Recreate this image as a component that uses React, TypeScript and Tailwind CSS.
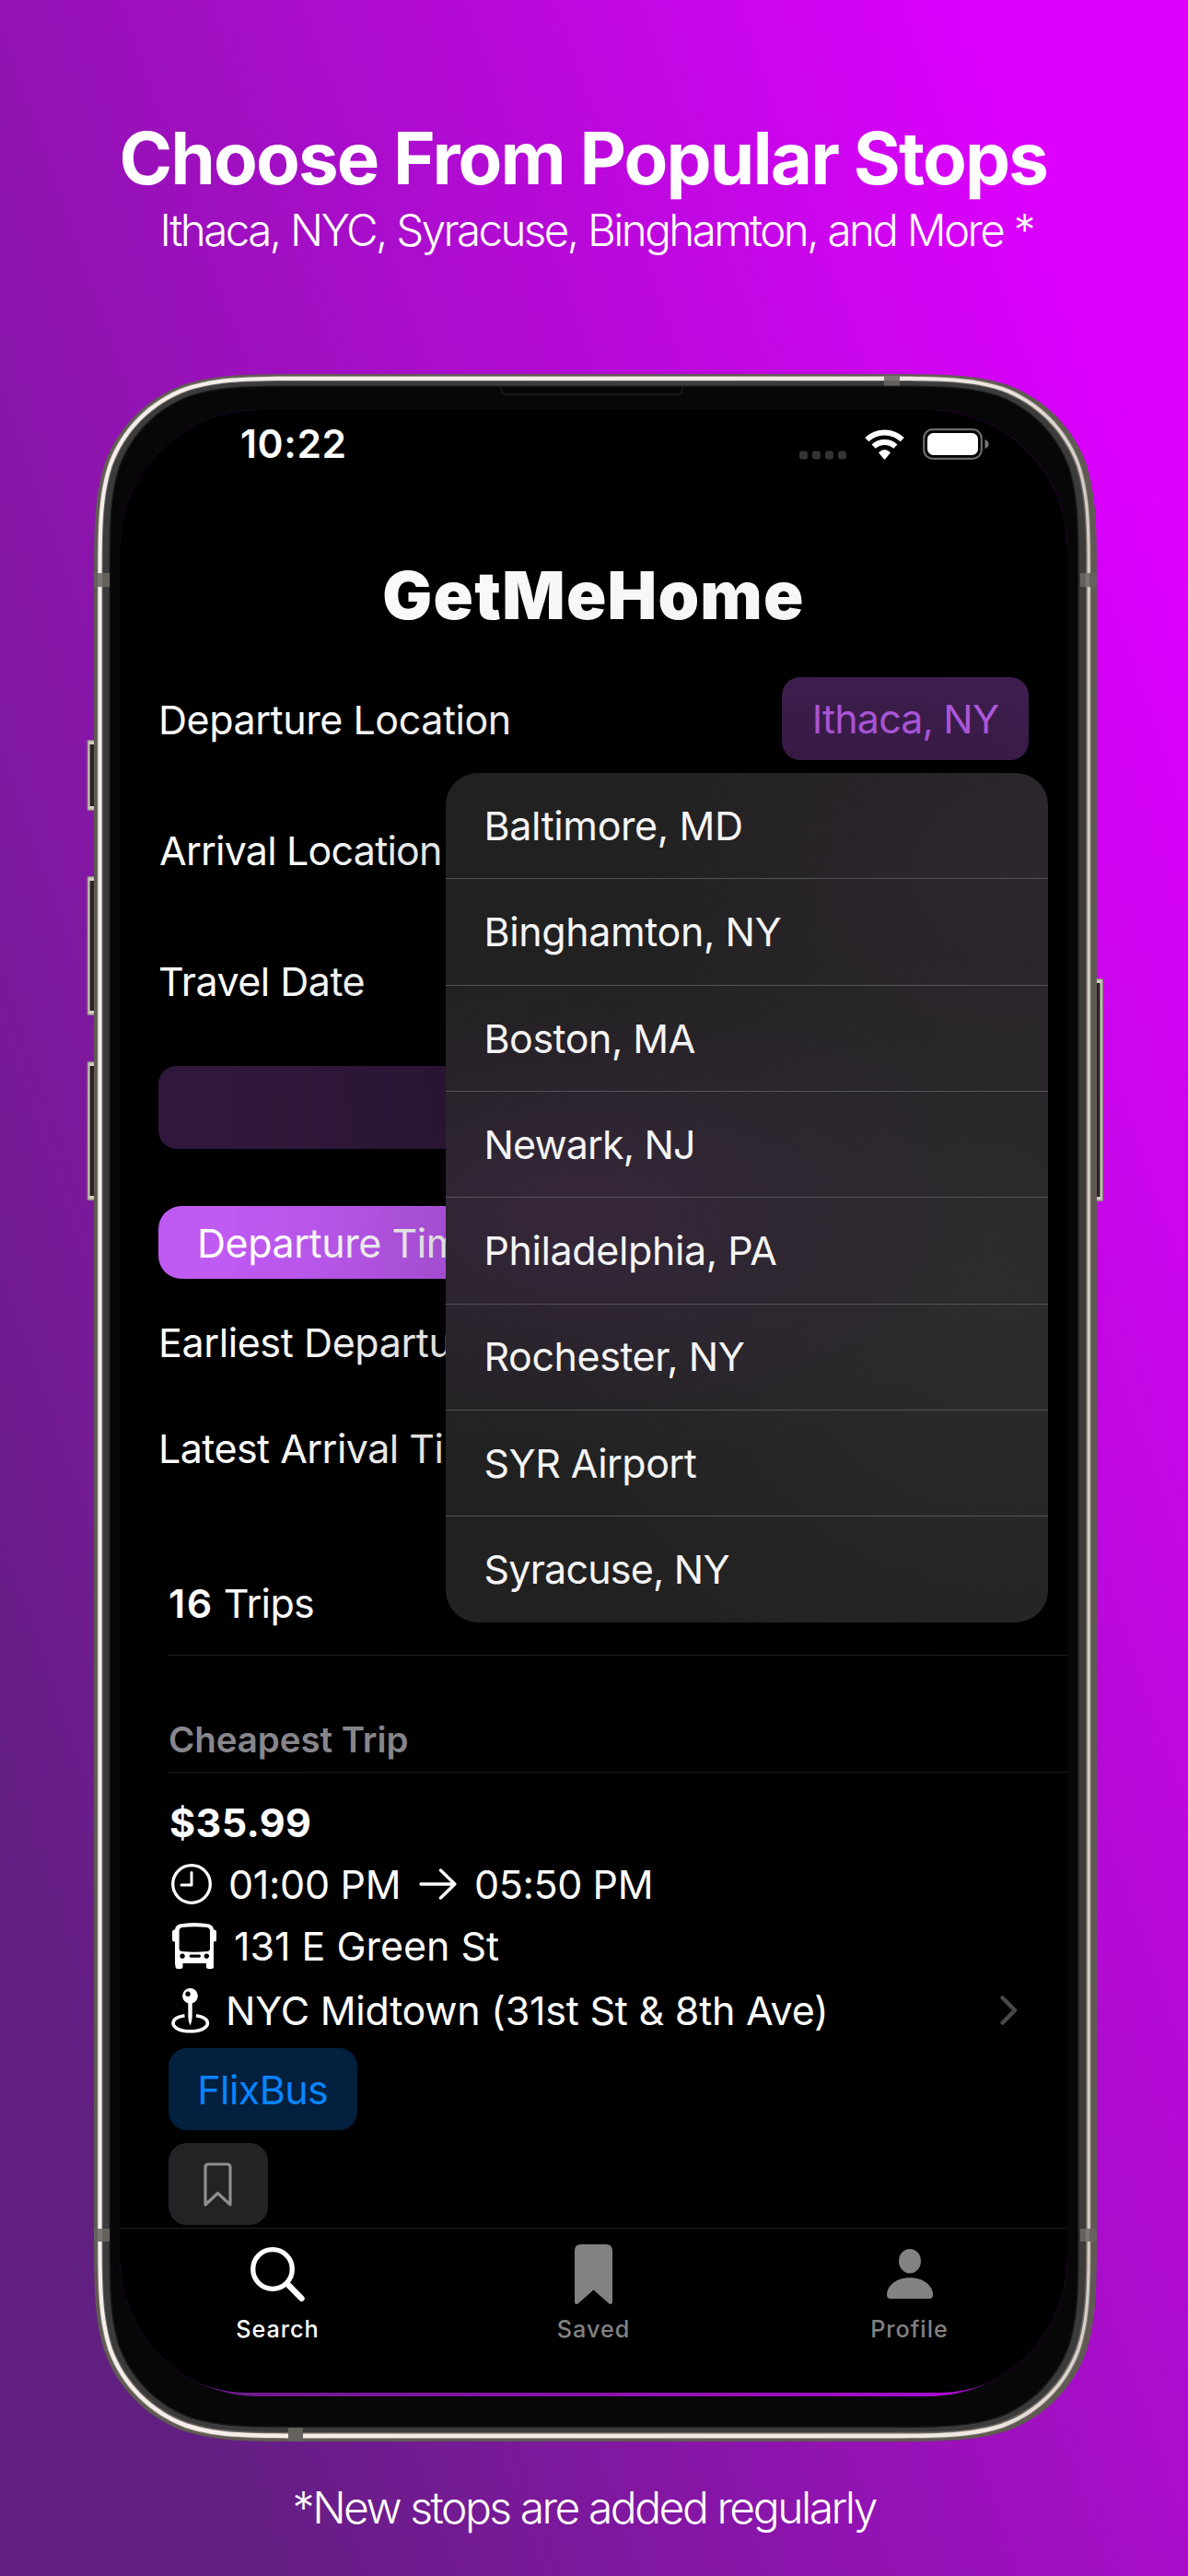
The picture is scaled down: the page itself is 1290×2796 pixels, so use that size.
import React from "react";

/** Rounded rectangle with continuous-curvature corners. */
function squircle(x: number, y: number, w: number, h: number, r: number) {
  const a = 1.52866483 * r;
  const b = 1.08849323 * r;
  const c = 0.86840689 * r;
  const d = 0.63149399 * r;
  const e = 0.07491176 * r;
  const f = 0.37282392 * r;
  const g = 0.16905899 * r;
  const R = x + w;
  const B = y + h;
  return [
    `M${x + a} ${y}H${R - a}`,
    `C${R - b} ${y} ${R - c} ${y} ${R - d} ${y + e}`,
    `C${R - f} ${y + g} ${R - g} ${y + f} ${R - e} ${y + d}`,
    `C${R} ${y + c} ${R} ${y + b} ${R} ${y + a}`,
    `V${B - a}`,
    `C${R} ${B - b} ${R} ${B - c} ${R - e} ${B - d}`,
    `C${R - g} ${B - f} ${R - f} ${B - g} ${R - d} ${B - e}`,
    `C${R - c} ${B} ${R - b} ${B} ${R - a} ${B}`,
    `H${x + a}`,
    `C${x + b} ${B} ${x + c} ${B} ${x + d} ${B - e}`,
    `C${x + f} ${B - g} ${x + g} ${B - f} ${x + e} ${B - d}`,
    `C${x} ${B - c} ${x} ${B - b} ${x} ${B - a}`,
    `V${y + a}`,
    `C${x} ${y + b} ${x} ${y + c} ${x + e} ${y + d}`,
    `C${x + g} ${y + f} ${x + f} ${y + g} ${x + d} ${y + e}`,
    `C${x + c} ${y} ${x + b} ${y} ${x + a} ${y}Z`,
  ].join("");
}

function SideButton({ x, y, h, right = false }: { x: number; y: number; h: number; right?: boolean }) {
  return (
    <g>
      <rect x={x} y={y} width="8" height={h} rx="1.5" fill="#8f8a80" />
      <rect x={right ? x : x + 1.5} y={y + 1.5} width="6.5" height={h - 3} fill="#d2cdc3" />
      <rect x={right ? x : x + 3} y={y + 5} width="4.5" height={h - 10} fill="#2b2422" />
    </g>
  );
}

function PhoneFrame() {
  return (
    <svg
      className="pointer-events-none absolute top-0 -left-3"
      width="1113"
      height="2244"
      viewBox="-12 0 1113 2244"
      aria-hidden="true"
    >
      <defs>
        <linearGradient id="rim" x1="0" x2="1" y1="0" y2="0">
          <stop offset="0" stopColor="#f5eeea" />
          <stop offset="0.9" stopColor="#efe7e2" />
          <stop offset="1" stopColor="#d3cbc5" />
        </linearGradient>
      </defs>
      <SideButton x={-7.5} y={397} h={77} />
      <SideButton x={-7.5} y={545} h={151} />
      <SideButton x={-7.5} y={746} h={151} />
      <SideButton x={1088} y={656} h={242} right />
      <path d={squircle(0, 0, 1089, 2244, 154)} fill="#5f5b53" />
      <path d={squircle(3.6, 2, 1079, 2239, 151.5)} fill="#8a837c" />
      <path d={squircle(4.4, 2.8, 1077.4, 2237.4, 151)} fill="url(#rim)" />
      <path d={squircle(8.6, 7, 1070, 2228.5, 147)} fill="#6d6763" />
      <path d={squircle(9.6, 8, 1067.5, 2226, 146)} fill="#3b3b3b" />
      <path d={squircle(16.5, 12.5, 1053, 2216.5, 139.5)} fill="#191919" />
      <path d={squircle(18, 14, 1050, 2213.5, 138)} fill="#070707" />
      <g fill="#65625e">
        <rect x="0" y="216" width="17" height="15" />
        <rect x="0" y="2013" width="17" height="14" />
        <rect x="1071" y="216" width="18" height="15" />
        <rect x="1071" y="2013" width="18" height="14" />
        <rect x="858" y="0" width="17" height="12.5" />
        <rect x="211" y="2229" width="16" height="15" />
      </g>
      <g fill="#7b7873">
        <rect x="4" y="216" width="5" height="15" />
        <rect x="4" y="2013" width="5" height="14" />
        <rect x="1077" y="216" width="4" height="15" />
        <rect x="1077" y="2013" width="4" height="14" />
        <rect x="858" y="2" width="17" height="5" />
      </g>
      <path d="M441.5 14l2 6q.7 2 3 2H635q2 0 2.700-2l2-6" fill="#060606" stroke="#1e1e1e" strokeWidth="1.300" />
    </svg>
  );
}

function StatusIcons() {
  return (
    <div className="flex items-center gap-5">
      <svg width="51" height="33" viewBox="0 0 51 33" fill="#343434">
        <rect x="0" y="23.500" width="9" height="9" rx="3" />
        <rect x="14" y="23.500" width="9" height="9" rx="3" />
        <rect x="28" y="23.500" width="9" height="9" rx="3" />
        <rect x="42" y="23.500" width="9" height="9" rx="3" />
      </svg>
      <svg width="43" height="33" viewBox="0 0 43 33" fill="none" stroke="#fff" strokeWidth="6">
        <path d="M2.200 11.200A28 28 0 0 1 40.800 11.200" />
        <path d="M9.600 18.600A17.500 17.500 0 0 1 33.400 18.600" />
        <path d="M21.500 32L16 25.200Q21.500 20.200 27 25.200Z" fill="#fff" stroke="#fff" strokeWidth="1.500" strokeLinejoin="round" />
      </svg>
      <svg width="72" height="34" viewBox="0 0 72 34">
        <rect x="1.200" y="1.200" width="62.600" height="31.600" rx="9.500" fill="none" stroke="#6b6b6b" strokeWidth="2.200" />
        <rect x="5" y="5" width="55" height="24" rx="6.500" fill="#fff" />
        <path d="M67.500 12q4 1.500 4 5t-4 5z" fill="#767676" />
      </svg>
    </div>
  );
}

function ClockIcon() {
  return (
    <svg width="44" height="44" viewBox="0 0 44 44" fill="none" stroke="#fff" strokeLinecap="round" strokeLinejoin="round">
      <circle cx="22" cy="22" r="20.300" strokeWidth="3.300" />
      <path d="M22 9.500V23H11" strokeWidth="3" />
    </svg>
  );
}

function ArrowIcon() {
  return (
    <svg width="41" height="34" viewBox="0 0 41 34" fill="none" stroke="#fff" strokeWidth="3.400" strokeLinecap="round" strokeLinejoin="round">
      <path d="M2 17H38.500M23.500 2L38.800 17L23.500 32" />
    </svg>
  );
}

function BusIcon() {
  return (
    <svg width="48" height="50" viewBox="0 0 48 50" fill="#fff">
      <path
        fillRule="evenodd"
        d="M3 7.500Q3.300 3 8 1.500Q15 0 24 0T40 1.500Q44.700 3 45 7.500V47.500Q45 50 42.500 50H39.500Q37 50 37 47.500V44H11.500V47.500Q11.500 50 9 50H6Q3.500 50 3.500 47.500L3 44ZM11 5Q7.600 5.500 7.600 9V28Q7.600 30.700 10.500 31Q24 32.500 38 31Q41 30.700 41 28V9Q41 5.500 37.500 5Q24 3.600 11 5ZM11 33.400a2.800 2.800 0 1 0 .01 0ZM37.300 33.400a2.800 2.800 0 1 0 .01 0ZM20.200 34.500a1.600 1.600 0 0 0 0 3.200h9.200a1.600 1.600 0 0 0 0-3.200Z"
      />
      <rect x="0" y="7.500" width="6" height="13" rx="2.500" />
      <rect x="42" y="7.500" width="6" height="13" rx="2.500" />
    </svg>
  );
}

function PinIcon() {
  return (
    <svg width="42" height="49" viewBox="0 0 42 49">
      <path d="M14.500 29.800C7 31 2 34 2 38C2 43 10 46.800 20.700 46.800S39.400 43 39.400 38C39.400 34 34 31 27 29.800" fill="none" stroke="#fff" strokeWidth="3.600" />
      <path fillRule="evenodd" fill="#fff" d="M20.500 0a8.400 8.400 0 0 1 2.200 16.500V31q-.2 6-2.200 9.500Q18.500 37 18.300 31V16.500A8.400 8.400 0 0 1 20.500 0ZM18 3.500a2.800 2.800 0 1 0 .01 0Z" />
    </svg>
  );
}

function SearchIcon() {
  return (
    <svg width="59" height="59" viewBox="0 0 59 59" fill="none" stroke="#fff">
      <circle cx="24" cy="24" r="21.300" strokeWidth="5.300" />
      <path d="M40 40L55.500 55.800" strokeWidth="6.400" strokeLinecap="round" />
    </svg>
  );
}

function BookmarkFilled() {
  return (
    <svg width="41" height="65" viewBox="0 0 41 65" fill="#828282">
      <path d="M0 7Q0 0 7 0H34Q41 0 41 7V62Q41 66 37.500 64.500L20.500 49.500L3.500 64.500Q0 66 0 62Z" />
    </svg>
  );
}

function ProfileIcon() {
  return (
    <svg width="50" height="54" viewBox="0 0 50 54" fill="#828282">
      <ellipse cx="25" cy="13.200" rx="12" ry="13.200" />
      <path d="M4 54Q0 54 0 50C0 40 10 31.300 25 31.300S50 40 50 50Q50 54 46 54Z" />
    </svg>
  );
}

const STOPS = [
  { name: "Baltimore, MD", cls: "tracking-[-0.390px]" },
  { name: "Binghamton, NY", cls: "tracking-[-0.400px]" },
  { name: "Boston, MA", cls: "tracking-[-0.510px]" },
  { name: "Newark, NJ", cls: "tracking-[-0.870px]" },
  { name: "Philadelphia, PA", cls: "tracking-[-0.400px]" },
  { name: "Rochester, NY", cls: "tracking-[-0.450px]" },
  { name: "SYR Airport", cls: "tracking-[-0.550px]" },
  { name: "Syracuse, NY", cls: "tracking-[-0.800px]" },
];

function StopMenu() {
  return (
    <ul className="absolute top-[394px] left-[353.500px] flex h-[921.500px] w-[654.500px] flex-col overflow-hidden rounded-[35px] bg-[#212121] bg-[radial-gradient(ellipse_500px_270px_at_150px_480px,#37273c_0%,#34263990_45%,transparent_100%),radial-gradient(ellipse_420px_340px_at_620px_90px,#2e262f_0%,transparent_100%),radial-gradient(ellipse_520px_520px_at_600px_560px,#2c2c2c_0%,#2a2a2bb0_50%,transparent_100%)] text-[43px] text-[#f5f5f5]">
      {STOPS.map((s, i) => (
        <li
          key={s.name}
          className={
            "flex flex-1 items-center pl-[42px] " + s.cls + (i > 0 ? " border-t border-[#545357]" : "")
          }
        >
          {s.name}
        </li>
      ))}
    </ul>
  );
}

function SearchForm() {
  return (
    <section className="mt-11 flex flex-col">
      <div className="flex h-[90px] items-center justify-between pr-[42px] pl-[42px]">
        <span className="pt-[2px] tracking-[-0.450px]">Departure Location</span>
        <button className="h-[90px] w-[268px] rounded-[20px] bg-[#401f50] pt-[1px] tracking-[-0.850px] text-[#bb5eec]">
          Ithaca, NY
        </button>
      </div>
      <div className="mt-[53px] flex h-[90px] items-center pl-[43px] tracking-[-0.790px]">Arrival Location</div>
      <div className="mt-[52px] flex h-[90px] items-center pl-[42px] tracking-[-0.520px]">Travel Date</div>
      <div className="mt-[47px] mr-[42px] ml-[42px] h-[90px] rounded-[20px] bg-[#30183c]" />
      <div className="mt-[62px] ml-[42px] flex h-[79px] w-[380px] items-center rounded-[25px] bg-[#bf5af2] pt-[2px] pl-[42px] tracking-[-0.450px]">
        <span className="w-[270px] overflow-hidden">Departure Time</span>
      </div>
      <div className="mt-3 ml-[42px] flex h-[115px] w-[312px] items-center overflow-hidden tracking-[-0.400px]">
        Earliest Departure Time
      </div>
      <div className="ml-[42px] flex h-[115px] w-[312px] items-center overflow-hidden tracking-[-0.550px]">
        Latest Arrival Time
      </div>
    </section>
  );
}

function Results() {
  return (
    <section className="mt-[54px] flex flex-col pl-[53px]">
      <div className="flex h-[112px] items-center">
        <span className="font-semibold tracking-[1.500px]">16</span>
        <span className="pl-[11px] tracking-[-0.630px]">Trips</span>
      </div>
      <div className="h-px bg-[#232323]" />
      <h2 className="mt-[61px] h-[60px] text-[38.500px] leading-[60px] font-semibold tracking-[-0.080px] text-[#88878d]">
        Cheapest Trip
      </h2>
      <div className="mt-[5px] h-px bg-[#1c1c1c]" />
      <p className="mt-6 h-[60px] pl-[1px] leading-[60px] font-bold tracking-[0.370px]">$35.99</p>
      <div className="mt-1 flex h-[66px] items-center pl-[3px]">
        <ClockIcon />
        <span className="w-[205px] pl-[18px] tracking-[-0.300px]">01:00 PM</span>
        <span className="w-[60px] pl-5">
          <ArrowIcon />
        </span>
        <span className="pl-[20px] tracking-[-0.400px]">05:50 PM</span>
      </div>
      <div className="flex h-[68px] items-center pl-1">
        <BusIcon />
        <span className="pl-[19px] tracking-[-0.030px]">131 E Green St</span>
      </div>
      <div className="flex h-[72px] items-center pl-[3px]">
        <PinIcon />
        <span className="pl-[17px] tracking-[-0.240px]">NYC Midtown (31st St &amp; 8th Ave)</span>
        <svg className="mr-[54px] ml-auto" width="19" height="32" viewBox="0 0 19 32" fill="none" stroke="#48484a" strokeWidth="4.600" strokeLinecap="round" strokeLinejoin="round">
          <path d="M2.700 2.500L16 16L2.700 29.500" />
        </svg>
      </div>
      <button className="mt-[5px] h-[89px] w-[204.500px] rounded-[20px] bg-[#03203f] pt-px tracking-[-0.570px] text-[#0a84ff]">
        FlixBus
      </button>
      <button className="mt-[14px] flex h-[89px] w-[107.500px] items-center justify-center rounded-[20px] bg-[#232325]">
        <svg width="31" height="48" viewBox="0 0 31 48" fill="none" stroke="#8e8e93" strokeWidth="3.200" strokeLinejoin="round">
          <path d="M2 5.500Q2 2 5.500 2H25.500Q29 2 29 5.500V46L15.500 33.500L2 46Z" />
        </svg>
      </button>
    </section>
  );
}

function Tab({ icon, label, cls }: { icon: React.ReactNode; label: string; cls: string }) {
  return (
    <div className="flex flex-1 flex-col items-center pt-[14px]">
      <div className="flex h-[70px] items-center">{icon}</div>
      <span className={"mt-[9px] text-[25.200px] leading-[32px] font-medium tracking-[0.960px] " + cls}>{label}</span>
    </div>
  );
}

export default function App() {
  return (
    <main className="flex h-[2796px] w-[1290px] flex-col overflow-hidden bg-[linear-gradient(70.7deg,#621f82_12.1%,#dd00ff_90.5%)] font-['Inter',sans-serif] text-white">
      <header className="h-[406px] shrink-0 pt-[127px] whitespace-nowrap">
        <h1 className="pl-[129.500px] text-[78px] leading-[90px] font-bold tracking-[-1.850px]">
          Choose From Popular Stops
        </h1>
        <p className="mt-[3px] pl-[173.500px] text-[47.500px] leading-[60px] font-light tracking-[-2.580px] [word-spacing:0.700px]">
          Ithaca, NYC, Syracuse, Binghamton, and More *
        </p>
      </header>

      <div className="relative ml-[102px] h-[2244px] w-[1089px] shrink-0 pt-[39px] pl-7">
        <PhoneFrame />
        <div className="relative h-[2156px] w-[1029px] overflow-hidden rounded-[150px] bg-[linear-gradient(90deg,#671d88,#8c12ae_50%,#b408da)]">
          <div className="relative flex h-[2152px] flex-col overflow-hidden rounded-b-[138px] bg-black text-[43px] whitespace-nowrap">
            <div className="flex h-[74px] shrink-0 items-center justify-between pr-[85px] pl-[131px]">
              <span className="text-[42.500px] leading-none font-semibold tracking-[0.640px]">10:22</span>
              <StatusIcons />
            </div>
            <h2 className="mt-[82px] h-[90px] text-center text-[71.500px] leading-[90px] font-black tracking-[1.250px] text-[#fafafa]">
              GetMeHome
            </h2>
            <SearchForm />
            <Results />
            <nav className="mt-[3px] flex flex-1 border-t border-[#1f1f1f]">
              <Tab icon={<SearchIcon />} label="Search" cls="text-white" />
              <Tab icon={<BookmarkFilled />} label="Saved" cls="text-[#828282]" />
              <Tab icon={<ProfileIcon />} label="Profile" cls="text-[#828282]" />
            </nav>
            <div className="pointer-events-none absolute top-[394px] left-[353.500px] h-[921.500px] w-[654.500px] rounded-[35px] shadow-[0_0_240px_rgba(0,0,0,0.400)]" />
            <StopMenu />
          </div>
        </div>
      </div>

      <p className="mt-[42px] pl-[317.600px] text-[48px] leading-[60px] font-light tracking-[-2.480px] whitespace-nowrap">
        *New stops are added regularly
      </p>
    </main>
  );
}
